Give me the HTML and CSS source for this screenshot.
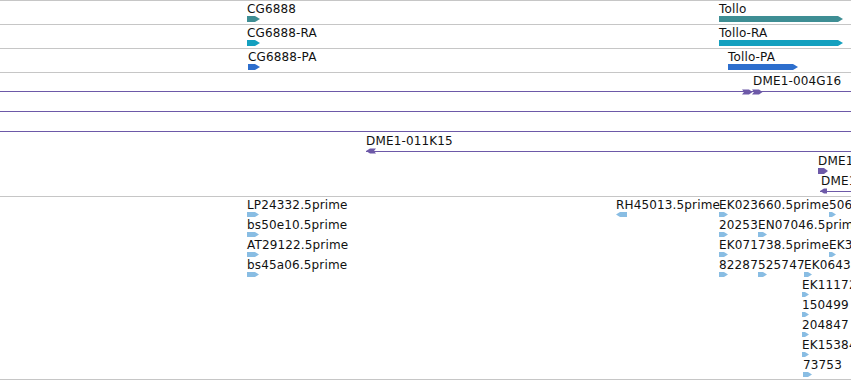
FILE: index.html
```html
<!DOCTYPE html>
<html lang="en">
<head>
    <meta charset="UTF-8">
    <meta name="viewport" content="width=device-width, initial-scale=1.0">
    <title>Track view</title>
    <link rel="stylesheet" href="styles.css">
</head>
<body>

    <div class="view">

        <!-- Gene tracks -->
        <div class="track genes">
            <div class="feature" style="left:247px">
                <span class="label">CG6888</span>
                <span class="glyph gene" style="width:13px"></span>
            </div>
            <div class="feature" style="left:719px">
                <span class="label">Tollo</span>
                <span class="glyph gene" style="width:124px"></span>
            </div>
        </div>

        <div class="track genes">
            <div class="feature" style="left:247px">
                <span class="label">CG6888-RA</span>
                <span class="glyph gene ra" style="width:13px"></span>
            </div>
            <div class="feature" style="left:719px">
                <span class="label">Tollo-RA</span>
                <span class="glyph gene ra" style="width:124px"></span>
            </div>
        </div>

        <div class="track genes">
            <div class="feature" style="left:248px">
                <span class="label">CG6888-PA</span>
                <span class="glyph gene pa" style="width:12px"></span>
            </div>
            <div class="feature" style="left:728px">
                <span class="label">Tollo-PA</span>
                <span class="glyph gene pa" style="width:70px"></span>
            </div>
        </div>

        <!-- Clone track -->
        <div class="track clones">
            <div class="row">
                <div class="feature" style="left:-20px">
                    <span class="label"></span>
                    <span class="glyph line" style="width:900px"></span>
                </div>
                <div class="feature" style="left:753px">
                    <span class="label">DME1-004G16</span>
                    <span class="glyph line" style="width:120px"></span>
                </div>
                <svg class="ends" style="left:742px" width="21" height="6" viewBox="0 0 21 6">
                    <polygon points="0,0.5 7,0.5 10.5,3 7,5.5 0,5.5 2,3" fill="#6d59a8"/>
                    <polygon points="10,0.5 17,0.5 20.5,3 17,5.5 10,5.5 12,3" fill="#6d59a8"/>
                </svg>
            </div>
            <div class="row">
                <div class="feature" style="left:-20px">
                    <span class="label"></span>
                    <span class="glyph line" style="width:900px"></span>
                </div>
            </div>
            <div class="row">
                <div class="feature" style="left:-20px">
                    <span class="label"></span>
                    <span class="glyph line" style="width:900px"></span>
                </div>
            </div>
            <div class="row">
                <div class="feature" style="left:366px">
                    <span class="label">DME1-011K15</span>
                    <span class="glyph line" style="width:500px">
                        <svg width="10" height="6" viewBox="0 0 10 6">
                            <polygon points="0,3 4,0.5 10,0.5 8,3 10,5.5 4,5.5" fill="#6d59a8"/>
                        </svg>
                    </span>
                </div>
            </div>
            <div class="row">
                <div class="feature" style="left:818px">
                    <span class="label">DME1-017H21</span>
                    <span class="glyph clone" style="width:10px"></span>
                </div>
            </div>
            <div class="row">
                <div class="feature" style="left:820px">
                    <span class="label shift">DME1-023B05</span>
                    <span class="glyph line" style="width:60px">
                        <svg width="7" height="6" viewBox="0 0 7 6">
                            <polygon points="0,3 4,0.5 7,0.5 7,5.5 4,5.5" fill="#6d59a8"/>
                        </svg>
                    </span>
                </div>
            </div>
        </div>

        <!-- EST track -->
        <div class="track ests">
            <div class="row">
                <div class="feature" style="left:247px">
                    <span class="label">LP24332.5prime</span>
                    <span class="glyph est" style="width:12px"></span>
                </div>
                <div class="feature" style="left:616px">
                    <span class="label">RH45013.5prime</span>
                    <span class="glyph est rev" style="width:11px"></span>
                </div>
                <div class="feature" style="left:719px">
                    <span class="label">EK023660.5prime</span>
                    <span class="glyph est" style="width:9px"></span>
                </div>
                <div class="feature" style="left:829px">
                    <span class="label">506372.5prime</span>
                    <span class="glyph est" style="width:7px"></span>
                </div>
            </div>
            <div class="row">
                <div class="feature" style="left:247px">
                    <span class="label">bs50e10.5prime</span>
                    <span class="glyph est" style="width:12px"></span>
                </div>
                <div class="feature" style="left:719px">
                    <span class="label">20253</span>
                    <span class="glyph est" style="width:9px"></span>
                </div>
                <div class="feature" style="left:758px">
                    <span class="label">EN07046.5prime</span>
                    <span class="glyph est" style="width:9px"></span>
                </div>
            </div>
            <div class="row">
                <div class="feature" style="left:247px">
                    <span class="label">AT29122.5prime</span>
                    <span class="glyph est" style="width:12px"></span>
                </div>
                <div class="feature" style="left:719px">
                    <span class="label">EK071738.5prime</span>
                    <span class="glyph est" style="width:9px"></span>
                </div>
                <div class="feature" style="left:829px">
                    <span class="label">EK3108.5prime</span>
                    <span class="glyph est" style="width:7px"></span>
                </div>
            </div>
            <div class="row">
                <div class="feature" style="left:247px">
                    <span class="label">bs45a06.5prime</span>
                    <span class="glyph est" style="width:12px"></span>
                </div>
                <div class="feature" style="left:719px">
                    <span class="label">82287</span>
                    <span class="glyph est" style="width:9px"></span>
                </div>
                <div class="feature" style="left:758px">
                    <span class="label">525747</span>
                    <span class="glyph est" style="width:9px"></span>
                </div>
                <div class="feature" style="left:804px">
                    <span class="label">EK064311.5prime</span>
                    <span class="glyph est" style="width:8px"></span>
                </div>
            </div>
            <div class="row">
                <div class="feature" style="left:802px">
                    <span class="label">EK111724.5prime</span>
                    <span class="glyph est" style="width:7px"></span>
                </div>
            </div>
            <div class="row">
                <div class="feature" style="left:802px">
                    <span class="label">150499</span>
                    <span class="glyph est" style="width:7px"></span>
                </div>
            </div>
            <div class="row">
                <div class="feature" style="left:802px">
                    <span class="label">204847</span>
                    <span class="glyph est" style="width:7px"></span>
                </div>
            </div>
            <div class="row">
                <div class="feature" style="left:802px">
                    <span class="label">EK153848.5prime</span>
                    <span class="glyph est" style="width:7px"></span>
                </div>
            </div>
            <div class="row">
                <div class="feature" style="left:803px">
                    <span class="label">73753</span>
                    <span class="glyph est" style="width:9px"></span>
                </div>
            </div>
        </div>

    </div>

</body>
</html>
```

FILE: styles.css
```css
body {
    margin: 0;
    padding: 0;
    background-color: #fff;
    font-family: "DejaVu Sans", sans-serif;
    font-size: 12px;
    letter-spacing: 0.15px;
    color: #111;
}

.view {
    width: 851px;
    height: 380px;
    overflow: hidden;
    position: relative;
}

.track {
    position: relative;
    border-top: 1px solid #c6c6c6;
}

.track.genes {
    height: 23px;
}

.track.clones {
    height: 123px;
}

.track.ests {
    height: 182px;
    border-bottom: 1px solid #c6c6c6;
}

.row {
    position: relative;
    height: 20px;
}

/* features sit at their coordinate along the track */
.feature {
    position: absolute;
    top: 1px;
    display: flex;
    flex-direction: column;
    align-items: flex-start;
}

.label {
    display: block;
    height: 14px;
    line-height: 14px;
    white-space: nowrap;
}

.label.shift {
    margin-left: 1px;
}

.glyph {
    display: block;
    height: 6px;
}

.glyph.gene {
    background-color: #3e8e94;
    clip-path: polygon(0 0, calc(100% - 5px) 0, 100% 50%, calc(100% - 5px) 100%, 0 100%);
}

.glyph.gene.ra {
    background-color: #14a0bf;
}

.glyph.gene.pa {
    background-color: #2d6ecd;
}

.glyph.line {
    background: linear-gradient(#6d59a8, #6d59a8) 0 3px / 100% 1px no-repeat;
}

.glyph.line svg {
    display: block;
}

.glyph.clone {
    background-color: #6d59a8;
    clip-path: polygon(0 0, calc(100% - 4px) 0, 100% 50%, calc(100% - 4px) 100%, 0 100%);
}

.glyph.est {
    height: 5px;
    background-color: #89bde3;
    clip-path: polygon(0 0, calc(100% - 4px) 0, 100% 50%, calc(100% - 4px) 100%, 0 100%);
}

.glyph.est.rev {
    clip-path: polygon(4px 0, 100% 0, 100% 100%, 4px 100%, 0 50%);
}

.ends {
    position: absolute;
    top: 16px;
}
```
